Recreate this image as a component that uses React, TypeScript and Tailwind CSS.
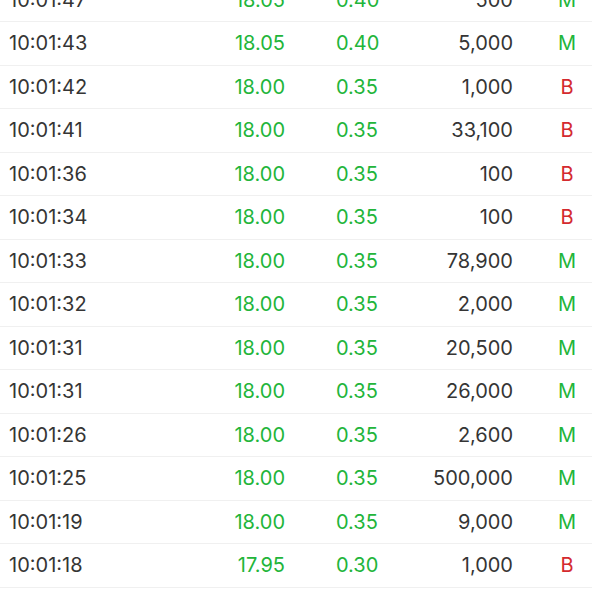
import React from "react";

type Row = { t: string; p: string; c: string; v: string; s: "M" | "B" };

const rows: Row[] = [
  { t: "10:01:47", p: "18.05", c: "0.40", v: "500", s: "M" },
  { t: "10:01:43", p: "18.05", c: "0.40", v: "5,000", s: "M" },
  { t: "10:01:42", p: "18.00", c: "0.35", v: "1,000", s: "B" },
  { t: "10:01:41", p: "18.00", c: "0.35", v: "33,100", s: "B" },
  { t: "10:01:36", p: "18.00", c: "0.35", v: "100", s: "B" },
  { t: "10:01:34", p: "18.00", c: "0.35", v: "100", s: "B" },
  { t: "10:01:33", p: "18.00", c: "0.35", v: "78,900", s: "M" },
  { t: "10:01:32", p: "18.00", c: "0.35", v: "2,000", s: "M" },
  { t: "10:01:31", p: "18.00", c: "0.35", v: "20,500", s: "M" },
  { t: "10:01:31", p: "18.00", c: "0.35", v: "26,000", s: "M" },
  { t: "10:01:26", p: "18.00", c: "0.35", v: "2,600", s: "M" },
  { t: "10:01:25", p: "18.00", c: "0.35", v: "500,000", s: "M" },
  { t: "10:01:19", p: "18.00", c: "0.35", v: "9,000", s: "M" },
  { t: "10:01:18", p: "17.95", c: "0.30", v: "1,000", s: "B" },
];

export default function App() {
  return (
    <div className="w-[600px] h-[600px] overflow-hidden bg-white font-['Inter',sans-serif] text-[20px]">
      <div className="-mt-[21.5px] flex flex-col">
        {rows.map((r, i) => (
          <div
            key={i}
            className="w-[592px] h-[43.5px] flex items-center border-b border-[#f0f0f0]"
          >
            <div className="shrink-0 w-[120px] pl-[9px] text-[#353535]">{r.t}</div>
            <div className="shrink-0 w-[165px] text-right text-[#22b53a]">{r.p}</div>
            <div className="shrink-0 w-[51px]" />
            <div className="shrink-0 w-[60px] text-[#22b53a]">{r.c}</div>
            <div className="shrink-0 w-[117px] text-right text-[#353535]">{r.v}</div>
            <div
              className={
                "shrink-0 ml-[29px] w-[50px] text-center " +
                (r.s === "M" ? "text-[#22b53a]" : "text-[#d42a2f]")
              }
            >
              {r.s}
            </div>
          </div>
        ))}
      </div>
    </div>
  );
}
